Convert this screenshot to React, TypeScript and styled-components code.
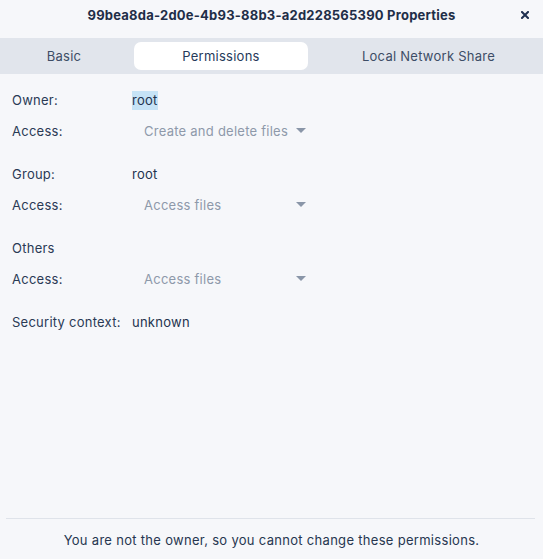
import React from "react";
import styled, { createGlobalStyle } from "styled-components";

const Global = createGlobalStyle`
  html, body { margin: 0; padding: 0; background: #f6f7fa; }
  body { font-family: Inter, "Noto Sans", sans-serif; font-size: 13px; color: #263650; letter-spacing: 0.25px; }
`;

const Window = styled.div`
  width: 543px;
  height: 559px;
  display: flex;
  flex-direction: column;
  background: #f6f7fa;
  overflow: hidden;
`;

const TitleBar = styled.div`
  height: 38px;
  box-sizing: border-box;
  padding-bottom: 8px;
  display: flex;
  align-items: center;
  justify-content: center;
  position: relative;
`;

const Title = styled.div`
  font-weight: 700;
  font-size: 13px;
  color: #1f2e48;
  letter-spacing: 0.22px;
`;

const CloseButton = styled.div`
  position: absolute;
  right: 14px;
  top: 11px;
  width: 8px;
  height: 8px;
  display: flex;
`;

const TabStrip = styled.div`
  height: 36px;
  box-sizing: border-box;
  padding: 4px;
  background: #e1e5ec;
  display: grid;
  grid-template-columns: 120px 174px 1fr;
  column-gap: 10px;
`;

const Tab = styled.div<{ $active?: boolean }>`
  display: flex;
  align-items: center;
  justify-content: center;
  padding-bottom: 1px;
  border-radius: 7px;
  background: ${(p) => (p.$active ? "#ffffff" : "transparent")};
  color: ${(p) => (p.$active ? "#263a5a" : "#3d4d66")};
  font-size: 13px;
`;

const Content = styled.div`
  flex: 1;
  padding: 10px 12px 0 12px;
  display: flex;
  flex-direction: column;
`;

const Row = styled.div<{ $gapTop?: boolean }>`
  height: 31px;
  display: grid;
  grid-template-columns: 120px auto;
  align-items: center;
  margin-top: ${(p) => (p.$gapTop ? "12px" : "0")};
`;

const Label = styled.div`
  color: #2a3a55;
`;

const Value = styled.div`
  color: #23334e;
  justify-self: start;
`;

const Selected = styled.span`
  background: #c6e3f6;
  padding: 1px 0 2px;
`;

const Dropdown = styled.div`
  width: 175px;
  box-sizing: border-box;
  padding: 0 1px 0 12px;
  display: flex;
  align-items: center;
  justify-content: space-between;
  gap: 5px;
  color: #8e99aa;
  white-space: nowrap;
`;

const Separator = styled.div`
  margin: 0 8px 0 6px;
  height: 1px;
  background: #dfe3ea;
`;

const Footer = styled.div`
  height: 40px;
  padding-top: 1px;
  box-sizing: border-box;
  display: flex;
  align-items: center;
  justify-content: center;
  color: #263650;
  letter-spacing: 0.3px;
`;

const Arrow = () => (
  <svg width="10" height="5" viewBox="0 0 10 5">
    <path d="M0 0 L10 0 L5 5 Z" fill="#8a96a8" />
  </svg>
);

const Select: React.FC<{ text: string }> = ({ text }) => (
  <Dropdown>
    <span>{text}</span>
    <Arrow />
  </Dropdown>
);

export default function App() {
  return (
    <>
      <Global />
      <Window>
        <TitleBar>
          <Title>99bea8da-2d0e-4b93-88b3-a2d228565390 Properties</Title>
          <CloseButton>
            <svg width="8" height="8" viewBox="0 0 8 8">
              <path d="M1 1 L7 7 M7 1 L1 7" stroke="#1f3050" strokeWidth="2" strokeLinecap="square" />
            </svg>
          </CloseButton>
        </TitleBar>
        <TabStrip>
          <Tab>Basic</Tab>
          <Tab $active>Permissions</Tab>
          <Tab>Local Network Share</Tab>
        </TabStrip>
        <Content>
          <Row>
            <Label>Owner:</Label>
            <Value>
              <Selected>root</Selected>
            </Value>
          </Row>
          <Row>
            <Label>Access:</Label>
            <Select text="Create and delete files" />
          </Row>
          <Row $gapTop>
            <Label>Group:</Label>
            <Value>root</Value>
          </Row>
          <Row>
            <Label>Access:</Label>
            <Select text="Access files" />
          </Row>
          <Row $gapTop>
            <Label>Others</Label>
          </Row>
          <Row>
            <Label>Access:</Label>
            <Select text="Access files" />
          </Row>
          <Row $gapTop>
            <Label>Security context:</Label>
            <Value>unknown</Value>
          </Row>
        </Content>
        <Separator />
        <Footer>You are not the owner, so you cannot change these permissions.</Footer>
      </Window>
    </>
  );
}
